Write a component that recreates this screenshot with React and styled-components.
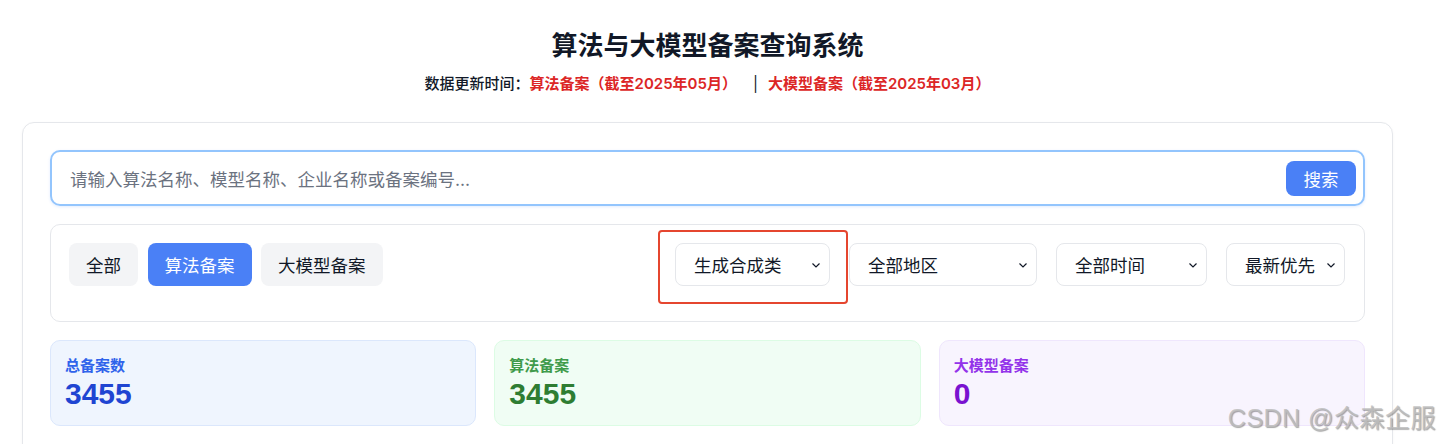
import React from "react";
import styled, { createGlobalStyle } from "styled-components";

const GlobalStyle = createGlobalStyle`
  body {
    margin: 0;
    background: #ffffff;
    font-family: Inter, "Noto Sans CJK SC", sans-serif;
    color: #111827;
  }
`;

const Page = styled.div`
  position: relative;
  width: 1440px;
  height: 444px;
  overflow: hidden;
`;

const Wrap = styled.div`
  width: 1371px;
  margin-left: 22px;
`;

const Header = styled.div`
  display: flex;
  flex-direction: column;
  align-items: center;
  padding-top: 29px;
`;

const Title = styled.h1`
  margin: 0;
  font-size: 26px;
  line-height: 34px;
  font-weight: 700;
  color: #111827;
`;

const Updated = styled.div`
  margin-top: 11px;
  font-size: 15px;
  line-height: 20px;
  font-weight: 500;
  color: #111827;
  display: flex;
  align-items: center;
  .red {
    color: #dc2626;
    font-weight: 600;
  }
  .sep {
    margin: 0 10px 0 16px;
    font-weight: 400;
    color: #111827;
  }
`;

const Card = styled.div`
  margin-top: 28px;
  border: 1px solid #e5e7eb;
  border-radius: 12px;
  padding: 27px 27px 40px;
  box-shadow: 0 1px 3px rgba(0, 0, 0, 0.04);
  display: flex;
  flex-direction: column;
  gap: 18px;
`;

const SearchBox = styled.div`
  height: 56px;
  box-sizing: border-box;
  border: 2px solid #93c5fd;
  border-radius: 10px;
  display: flex;
  align-items: center;
  padding: 0 7px 0 18px;
  box-shadow: 0 1px 3px rgba(59, 130, 246, 0.15);
`;

const Placeholder = styled.div`
  flex: 1;
  font-size: 17.5px;
  color: #6b7280;
`;

const SearchButton = styled.div`
  width: 70px;
  height: 35px;
  border-radius: 8px;
  background: #4a80f6;
  color: #fff;
  font-size: 17.5px;
  display: flex;
  align-items: center;
  justify-content: center;
`;

const FilterBox = styled.div`
  border: 1px solid #e5e7eb;
  border-radius: 10px;
  padding: 18px 19px 35px 18px;
  display: flex;
  justify-content: space-between;
  align-items: flex-start;
`;

const Tabs = styled.div`
  display: flex;
  gap: 9.5px;
`;

const Tab = styled.div`
  height: 43px;
  padding: 0 17px;
  border-radius: 8px;
  display: flex;
  align-items: center;
  font-size: 17.5px;
  background: ${(p) => (p.$active ? "#4a80f6" : "#f3f4f6")};
  color: ${(p) => (p.$active ? "#ffffff" : "#111827")};
`;

const Selects = styled.div`
  display: flex;
  gap: 19px;
`;

const SelectBox = styled.div`
  position: relative;
  width: ${(p) => p.$w}px;
  height: 43px;
  box-sizing: border-box;
  border: 1px solid #e5e7eb;
  border-radius: 8px;
  padding: 0 8px 0 18px;
  display: flex;
  align-items: center;
  justify-content: space-between;
  font-size: 17.5px;
  color: #111827;
  background: #fff;
`;

const Highlight = styled.div`
  position: absolute;
  top: -14px;
  left: -18px;
  right: -19px;
  bottom: -19px;
  border: 2px solid #e5462f;
  border-radius: 4px;
  pointer-events: none;
`;

const Stats = styled.div`
  display: grid;
  grid-template-columns: repeat(3, 1fr);
  gap: 18px;
`;

const StatCard = styled.div`
  height: 86px;
  box-sizing: border-box;
  border-radius: 10px;
  border: 1px solid ${(p) => p.$border};
  background: ${(p) => p.$bg};
  padding: 14px 14px;
`;

const StatLabel = styled.div`
  font-size: 15px;
  line-height: 21px;
  font-weight: 600;
  color: ${(p) => p.$color};
`;

const StatValue = styled.div`
  font-family: "Liberation Sans", "Noto Sans CJK SC", sans-serif;
  font-size: 30px;
  line-height: 36px;
  font-weight: 700;
  color: ${(p) => p.$color};
`;

const Watermark = styled.div`
  position: absolute;
  right: 4px;
  top: 398px;
  font-family: "Liberation Sans", "Noto Sans CJK SC", sans-serif;
  font-size: 25px;
  color: rgba(190, 190, 190, 0.85);
  text-shadow: 1px 1px 1px rgba(0, 0, 0, 0.35);
  letter-spacing: 0.5px;
`;

const Chevron = () => (
  <svg width="10" height="10" viewBox="0 0 10 10" fill="none">
    <path d="M1.5 3.5 L5 7 L8.5 3.5" stroke="#111827" strokeWidth="1.2" />
  </svg>
);

const selects = [
  { label: "生成合成类", w: 155, mark: true },
  { label: "全部地区", w: 188 },
  { label: "全部时间", w: 151 },
  { label: "最新优先", w: 119 },
];

const stats = [
  { label: "总备案数", value: "3455", bg: "#eff5fe", border: "#dbe7fc", lc: "#2f63eb", vc: "#1f45d2" },
  { label: "算法备案", value: "3455", bg: "#f0fdf4", border: "#dcfce4", lc: "#3f9b4b", vc: "#2e7d32" },
  { label: "大模型备案", value: "0", bg: "#f8f4fe", border: "#efe6fd", lc: "#9333ea", vc: "#7a12d0" },
];

function App() {
  return (
    <Page>
      <GlobalStyle />
      <Wrap>
        <Header>
          <Title>算法与大模型备案查询系统</Title>
          <Updated>
            <span>数据更新时间：</span>
            <span className="red">算法备案（截至2025年05月）</span>
            <span className="sep">|</span>
            <span className="red">大模型备案（截至2025年03月）</span>
          </Updated>
        </Header>
        <Card>
          <SearchBox>
            <Placeholder>请输入算法名称、模型名称、企业名称或备案编号...</Placeholder>
            <SearchButton>搜索</SearchButton>
          </SearchBox>
          <FilterBox>
            <Tabs>
              <Tab>全部</Tab>
              <Tab $active>算法备案</Tab>
              <Tab>大模型备案</Tab>
            </Tabs>
            <Selects>
              {selects.map((s) => (
                <SelectBox key={s.label} $w={s.w}>
                  {s.label}
                  <Chevron />
                  {s.mark && <Highlight />}
                </SelectBox>
              ))}
            </Selects>
          </FilterBox>
          <Stats>
            {stats.map((s) => (
              <StatCard key={s.label} $bg={s.bg} $border={s.border}>
                <StatLabel $color={s.lc}>{s.label}</StatLabel>
                <StatValue $color={s.vc}>{s.value}</StatValue>
              </StatCard>
            ))}
          </Stats>
        </Card>
      </Wrap>
      <Watermark>CSDN @众森企服</Watermark>
    </Page>
  );
}

export default App;
